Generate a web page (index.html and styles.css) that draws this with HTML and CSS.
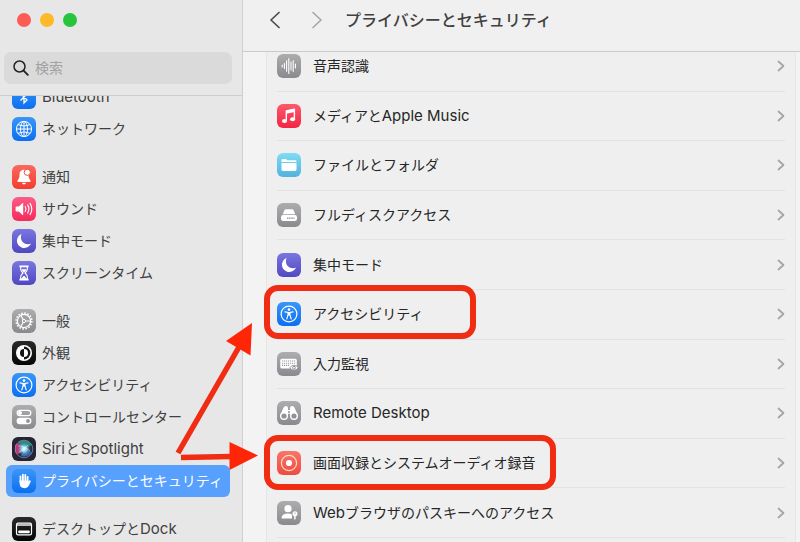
FILE: index.html
```html
<!DOCTYPE html>
<html lang="ja">
<head>
<meta charset="utf-8">
<meta name="viewport" content="width=device-width, initial-scale=1">
<title>プライバシーとセキュリティ</title>
<link rel="stylesheet" href="styles.css">
</head>
<body>
<svg class="defs" aria-hidden="true">
  <symbol id="moon" viewBox="0 0 24 24"><path fill="#fff" d="M9.6 4.9A7.4 7.4 0 0 0 8.9 8.2C8.9 12.3 12 15.2 16 15.2C17.100 15.2 18.200 14.900 19 14.500A7.300 7.300 0 1 1 9.600 4.900Z"/></symbol>
  <symbol id="access" viewBox="0 0 24 24"><circle cx="12" cy="12" r="7.900" fill="none" stroke="#fff" stroke-width="1.200"/><circle cx="12" cy="7.600" r="1.300" fill="#fff"/><path d="M8 9.900L11 10.500V13L9.800 17M16 9.900L13 10.500V13L14.200 17M11 10.500H13" fill="none" stroke="#fff" stroke-width="1.100" stroke-linecap="round"/><path d="M11 10.200H13V13.600H11Z" fill="#fff"/></symbol>
  <symbol id="chevron" viewBox="0 0 8 12"><path d="M1.500 1.500L6.500 6L1.500 10.500" fill="none" stroke="#a4a4a4" stroke-width="1.700" stroke-linecap="round" stroke-linejoin="round"/></symbol>
</svg>
<div class="window">
  <aside class="sidebar">
    <div class="sidebar-top">
      <div class="lights">
        <button class="light close" aria-label="閉じる"></button>
        <button class="light minimize" aria-label="しまう"></button>
        <button class="light maximize" aria-label="拡大"></button>
      </div>
      <label class="search">
        <svg width="18" height="18" viewBox="0 0 18 18" aria-hidden="true"><circle cx="7.500" cy="7.500" r="5.500" fill="none" stroke="#222" stroke-width="1.500"/><path d="M11.600 11.600L15.800 15.800" stroke="#222" stroke-width="1.900" stroke-linecap="round"/></svg>
        <input type="search" placeholder="検索" aria-label="検索">
      </label>
    </div>
    <nav class="side-scroll">
      <div class="group">
        <a class="item" href="#"><svg class="tile blue" viewBox="0 0 24 24"><path d="M8.500 8.500L15 15L12 18V6L15 9L8.500 15.500" fill="none" stroke="#fff" stroke-width="1.300"/></svg><span class="latin">Bluetooth</span></a>
        <a class="item" href="#"><svg class="tile blue" viewBox="0 0 24 24"><g fill="none" stroke="#fff" stroke-width="1"><circle cx="12" cy="12" r="7.600"/><ellipse cx="12" cy="12" rx="3.500" ry="7.600"/><path d="M12 4.400V19.600M4.400 12H19.600M6 7.700Q12 10.500 18 7.700M6 16.300Q12 13.500 18 16.300"/></g></svg>ネットワーク</a>
      </div>
      <div class="group">
        <a class="item" href="#"><svg class="tile red" viewBox="0 0 24 24"><path d="M12 4.800C8.600 4.800 7.600 7.200 7.500 10C7.400 13 6.800 13.800 5.800 14.900C5 15.900 5.400 16.900 6.600 16.900H17.400C18.600 16.900 19 15.900 18.200 14.900C17.200 13.800 16.600 13 16.500 10C16.400 7.200 15.400 4.800 12 4.800ZM10 17.800H14C13.600 20 10.400 20 10 17.800Z" fill="#fff"/><circle cx="15.300" cy="7.300" r="3.100" fill="#fff" stroke="#f3503f" stroke-width="1"/></svg>通知</a>
        <a class="item" href="#"><svg class="tile pink" viewBox="0 0 24 24"><path d="M3.600 10.200Q3.600 9.500 4.300 9.500H6.800L10.300 6.200Q11.200 5.600 11.200 6.600V17.400Q11.200 18.400 10.300 17.800L6.800 14.500H4.300Q3.600 14.500 3.600 13.800Z" fill="#fff"/><path d="M13.200 9.500Q14.800 12 13.200 14.500M15.600 7.900Q18.200 12 15.600 16.100M18 6.400Q21.600 12 18 17.600" fill="none" stroke="#fff" stroke-width="1.100" stroke-linecap="round"/></svg>サウンド</a>
        <a class="item" href="#"><svg class="tile indigo"><use href="#moon"/></svg>集中モード</a>
        <a class="item" href="#"><svg class="tile indigo" viewBox="0 0 24 24"><path d="M7.400 4.500H16.600V6.200H7.400ZM7.400 17.800H16.600V19.500H7.400Z" fill="#fff"/><path d="M8.700 6V8.200Q8.700 9.800 11 12Q8.700 14.200 8.700 15.800V18H15.300V15.800Q15.300 14.200 13 12Q15.300 9.800 15.300 8.200V6" fill="none" stroke="#fff" stroke-width="1.100"/><path d="M9.400 8.200H14.600Q13.800 10.200 12 11.600Q10.200 10.200 9.400 8.200ZM9.200 17.800L12 14.400L14.800 17.800Z" fill="#fff"/></svg>スクリーンタイム</a>
      </div>
      <div class="group">
        <a class="item" href="#"><svg class="tile gray" viewBox="0 0 24 24"><g fill="none" stroke="#fff"><circle cx="12" cy="12" r="7.900" stroke-width="1.500" stroke-dasharray="1.600 1.502"/><circle cx="12" cy="12" r="6.600" stroke-width="1.200"/><circle cx="12" cy="12" r="1.600"/><path d="M13.600 12H18.500M11.200 10.600L8.700 6.300M11.200 13.400L8.700 17.700" stroke-width="1.100"/></g></svg>一般</a>
        <a class="item" href="#"><svg class="tile black" viewBox="0 0 24 24"><circle cx="12" cy="12" r="8" fill="#fff"/><path d="M12 5.600A6.400 6.400 0 0 1 12 18.400Z" fill="#151515"/><path d="M12 8A4 4 0 0 0 12 16Z" fill="#151515"/><path d="M12 8A4 4 0 0 1 12 16Z" fill="#fff"/></svg>外観</a>
        <a class="item" href="#"><svg class="tile blue"><use href="#access"/></svg>アクセシビリティ</a>
        <a class="item" href="#"><svg class="tile gray" viewBox="0 0 24 24"><rect x="5.200" y="5.300" width="13.600" height="5.400" rx="2.700" fill="none" stroke="#fff" stroke-width="1.200"/><circle cx="8" cy="8" r="2" fill="#fff"/><rect x="4.600" y="12.700" width="14.800" height="6.600" rx="3.300" fill="#fff"/><circle cx="16" cy="16" r="2" fill="#96969a"/></svg>コントロールセンター</a>
        <a class="item" href="#"><svg class="tile siri" viewBox="0 0 24 24"><defs><radialGradient id="orb"><stop offset="0" stop-color="#fff"/><stop offset=".3" stop-color="#8ed7ef"/><stop offset=".7" stop-color="#3e7fa8" stop-opacity=".3"/><stop offset="1" stop-color="#243650" stop-opacity=".1"/></radialGradient></defs><path d="M3 8Q7 3 12 12Q6 20 3 15Z" fill="#e3276f"/><path d="M6 5Q15 1 20 8L12 12Z" fill="#20b58c" opacity=".8"/><path d="M12 12Q18 13 20 16Q15 21 9 19Z" fill="#3c75d8" opacity=".8"/><circle cx="12" cy="12" r="8.800" fill="url(#orb)" stroke="#8c9aab" stroke-width=".7"/><path d="M6 9Q11 8 18 14M7 15Q12 14 16 8" fill="none" stroke="#fff" stroke-width="1" opacity=".45"/></svg><span><span class="latin">Siri</span><span class="particle">と</span><span class="latin">Spotlight</span></span></a>
        <a class="item selected" href="#" aria-current="page"><svg class="tile blue" viewBox="0 0 24 24"><g fill="none" stroke="#fff" stroke-width="1.800" stroke-linecap="round"><path d="M8.500 13V7.300M10.900 12V5.700M13.300 12V6M15.600 13V7.800M17.900 12.300L16 15.500"/></g><path d="M7.600 11.500H16.500V14L18 13Q16.800 19.200 12.600 19.200Q7.600 19.200 7.600 14Z" fill="#fff"/></svg>プライバシーとセキュリティ</a>
      </div>
      <div class="group">
        <a class="item" href="#"><svg class="tile black" viewBox="0 0 24 24"><rect x="4.500" y="6.200" width="15" height="11.600" rx="1.600" fill="none" stroke="#fff" stroke-width="1.200"/><path d="M5 7H19V9H5Z" fill="#bbb"/><rect x="6.300" y="13.500" width="11.400" height="2.700" rx=".6" fill="#fff"/></svg><span>デスクトップと<span class="latin">Dock</span></span></a>
      </div>
    </nav>
  </aside>
  <main class="main">
    <header class="toolbar">
      <button class="nav" aria-label="戻る"><svg width="12" height="18" viewBox="0 0 12 18"><path d="M10 1.500L2 9L10 16.500" fill="none" stroke="#4a4a4a" stroke-width="1.700" stroke-linecap="round" stroke-linejoin="round"/></svg></button>
      <button class="nav" aria-label="進む"><svg width="12" height="18" viewBox="0 0 12 18"><path d="M2 1.500L10 9L2 16.500" fill="none" stroke="#a6a6a6" stroke-width="1.600" stroke-linecap="round" stroke-linejoin="round"/></svg></button>
      <h1>プライバシーとセキュリティ</h1>
    </header>
    <div class="content">
      <div class="card">
        <a class="row" href="#"><svg class="tile gray" viewBox="0 0 24 24"><path d="M5.200 11V13M7.400 9.500V14.500M9.600 6.800V17.200M11.800 4.500V19.500M14 8V16M16.200 6.500V17.500M18.400 10V14" stroke="#fff" stroke-width="1.100" stroke-linecap="round"/></svg><span class="name">音声認識</span><svg class="chev"><use href="#chevron"/></svg></a>
        <a class="row" href="#"><svg class="tile music" viewBox="0 0 24 24"><path d="M9.300 16.600V7L17.400 5.300V15" fill="none" stroke="#fff" stroke-width="1.400" stroke-linejoin="round"/><path d="M9.300 6.500L17.400 4.900V8L9.300 9.700Z" fill="#fff"/><ellipse cx="7.500" cy="16.900" rx="2.500" ry="2" fill="#fff"/><ellipse cx="15.600" cy="15.300" rx="2.500" ry="2" fill="#fff"/></svg><span class="name">メディアと<span class="latin">Apple Music</span></span><svg class="chev"><use href="#chevron"/></svg></a>
        <a class="row" href="#"><svg class="tile cyan" viewBox="0 0 24 24"><path d="M4.500 9V7.300Q4.500 6 5.800 6H9L10.500 7.200H18.200Q19.500 7.200 19.500 8.500V9ZM4.500 10.100H19.500V16.500Q19.500 17.900 18.100 17.900H5.900Q4.500 17.900 4.500 16.500Z" fill="#fff"/></svg><span class="name">ファイルとフォルダ</span><svg class="chev"><use href="#chevron"/></svg></a>
        <a class="row" href="#"><svg class="tile gray" viewBox="0 0 24 24"><path d="M7.300 7.500Q7.700 6.200 9 6.200H15Q16.300 6.200 16.700 7.500L18.300 11.200H5.700Z" fill="#fff"/><rect x="4" y="12" width="16" height="6" rx="2.200" fill="#fff"/><path d="M10 15.100H17.500" stroke="#88888c" stroke-width="1.300" stroke-dasharray="1.200 .5"/></svg><span class="name">フルディスクアクセス</span><svg class="chev"><use href="#chevron"/></svg></a>
        <a class="row" href="#"><svg class="tile indigo"><use href="#moon"/></svg><span class="name">集中モード</span><svg class="chev"><use href="#chevron"/></svg></a>
        <a class="row" href="#"><svg class="tile blue"><use href="#access"/></svg><span class="name">アクセシビリティ</span><svg class="chev"><use href="#chevron"/></svg></a>
        <a class="row" href="#"><svg class="tile gray" viewBox="0 0 24 24"><rect x="3.300" y="6.800" width="16.500" height="9.600" rx="1.500" fill="#fff"/><path d="M5 9H18.500M5 11.200H18.500M5 13.400H13" stroke="#98989c" stroke-width="1.100" stroke-dasharray="1.200 .8"/><path d="M12.600 15.800Q17 10.800 21.400 15.800Q17 20.800 12.600 15.800Z" fill="#fff" stroke="#919195" stroke-width=".9"/><circle cx="17" cy="15.800" r="1.400" fill="#fff" stroke="#88888c" stroke-width=".9"/></svg><span class="name">入力監視</span><svg class="chev"><use href="#chevron"/></svg></a>
        <a class="row" href="#"><svg class="tile gray" viewBox="0 0 24 24"><path d="M3 15L6.400 6.700Q7.200 5 9 5Q11 5 11 7V9H13V7Q13 5 15 5Q16.800 5 17.600 6.700L21 15L17 18L13.300 14.500V12.800H10.700V14.500L7 18Z" fill="#fff"/><circle cx="7" cy="15" r="3.300" fill="#929296" stroke="#fff" stroke-width="1.400"/><circle cx="17" cy="15" r="3.300" fill="#929296" stroke="#fff" stroke-width="1.400"/><circle cx="12" cy="11" r="1" fill="#929296"/></svg><span class="name latin">Remote Desktop</span><svg class="chev"><use href="#chevron"/></svg></a>
        <a class="row" href="#"><svg class="tile record" viewBox="0 0 24 24"><circle cx="12" cy="12" r="7.600" fill="none" stroke="#ffe0bd" stroke-width="1.200"/><circle cx="12" cy="12" r="3.100" fill="#fff"/></svg><span class="name">画面収録とシステムオーディオ録音</span><svg class="chev"><use href="#chevron"/></svg></a>
        <a class="row" href="#"><svg class="tile gray" viewBox="0 0 24 24"><circle cx="11" cy="7.700" r="3.600" fill="#fff"/><path d="M4.500 17.500Q4.500 12.500 11 12.500Q13.500 12.500 15 13.400V17.500Z" fill="#fff"/><circle cx="18" cy="12.800" r="2.500" fill="#fff"/><path d="M17.200 14H18.900V15.400L18.300 16L18.900 16.800L18 18.900L17.200 18Z" fill="#fff"/><circle cx="18" cy="12.100" r=".7" fill="#8b8b8f"/></svg><span class="name"><span class="latin">Web</span>ブラウザのパスキーへのアクセス</span><svg class="chev"><use href="#chevron"/></svg></a>
      </div>
    </div>
  </main>
  <svg class="marks" width="800" height="542" viewBox="0 0 800 542" aria-hidden="true">
    <g fill="none" stroke="#f02c12">
      <rect x="267" y="288" width="206" height="48" rx="11" stroke-width="6"/>
      <rect x="267" y="438" width="286" height="49" rx="11" stroke-width="6"/>
      <path d="M178 453L239 347M181 457.500L231 456.500" stroke-width="5.500"/>
    </g>
    <path d="M252 323L250.500 355.500L226 341ZM258 455.500L229.500 442V470Z" fill="#ff2608"/>
  </svg>
</div>
</body>
</html>
```

FILE: styles.css
```css
* { box-sizing: border-box; }

body {
  margin: 0;
  font: 14px/20px Inter, "Noto Sans CJK JP", sans-serif;
  color: #262626;
  background: #f3f3f3;
}

a { color: inherit; text-decoration: none; }
button { border: 0; padding: 0; background: none; }
.defs { position: absolute; width: 0; height: 0; }
.latin { font-size: 15px; }
.particle { margin: 0 1px; }

.window {
  position: relative;
  display: flex;
  height: 100vh;
  overflow: hidden;
}

.sidebar {
  display: flex;
  flex-direction: column;
  flex: 0 0 243px;
  min-width: 0;
  border-right: 1px solid #d0d0d0;
  background: #e7e7e7;
  color: #404040;
}

.sidebar-top {
  padding: 13px 10px 11px 4px;
  border-bottom: 1px solid #cdcdcd;
}

.lights {
  display: flex;
  gap: 9px;
  padding: 0 0 25px 13px;
}

.light { width: 14px; height: 14px; border-radius: 50%; }
.close { background: #fc5c55; }
.minimize { background: #fdb927; }
.maximize { background: #27c53c; }

.search {
  display: flex;
  align-items: center;
  gap: 5px;
  height: 32px;
  padding: 0 8px;
  border-radius: 7px;
  background: #dadada;
}

.search input {
  flex: 1;
  min-width: 0;
  border: 0;
  padding: 0;
  outline: 0;
  background: none;
  font: inherit;
}

.search input::placeholder { color: #a2a2a2; }

.side-scroll { flex: 1; min-height: 0; overflow: hidden; padding: 0 12px 0 6px; }
.group { margin-bottom: 16px; }
.group:first-child { margin-top: -15px; }

.item {
  display: flex;
  align-items: center;
  gap: 6px;
  height: 32px;
  padding-left: 6px;
  border-radius: 6px;
  white-space: nowrap;
}

.selected { background: #57a0fd; color: #fff; }

.tile { flex: none; width: 24px; height: 24px; border-radius: 6px; }
.blue { background: linear-gradient(#3a96f7, #0b6ff0); }
.red { background: linear-gradient(#fa6a60, #f23c2c); }
.pink { background: linear-gradient(#fc5c88, #f52a5c); }
.indigo { background: linear-gradient(#7a76e0, #5048c2); }
.gray { background: linear-gradient(#adadb0, #8a8a8e); }
.black { background: linear-gradient(#2a2a2a, #050505); }
.siri { background: #252336; }
.music { background: linear-gradient(#fb5a6c, #f32543); }
.cyan { background: linear-gradient(#7fdcf2, #52b2e0); }
.record { background: linear-gradient(#f9756b, #ee4a42); }

.main { display: flex; flex: 1; flex-direction: column; min-width: 0; }

.toolbar {
  display: flex;
  align-items: center;
  height: 52px;
  padding: 0 26px 11px;
  border-bottom: 1px solid #cacaca;
  background: #f0f0f0;
}

.nav { display: flex; width: 12px; margin-right: 30px; }
.nav + h1 { margin: 0 0 0 -8px; font-size: 16px; line-height: 24px; font-weight: 500; color: #404040; }

.content {
  display: flex;
  flex: 1;
  min-height: 0;
  padding: 0 4px 0 23px;
  overflow: hidden;
}

.card {
  display: grid;
  flex: 1;
  grid-auto-rows: 1fr;
  min-width: 0;
  margin-top: -10px;
  padding: 0 10px 4px;
  border: solid #e6e6e6;
  border-width: 0 1px;
  background: #efefef;
}

.row {
  display: flex;
  align-items: center;
  gap: 12px;
  min-height: 49px;
  border-bottom: 1px solid #e3e3e3;
}

.name { flex: 1; }
.chev { width: 8px; height: 12px; }

.marks { position: absolute; top: 0; left: 0; pointer-events: none; }
```
